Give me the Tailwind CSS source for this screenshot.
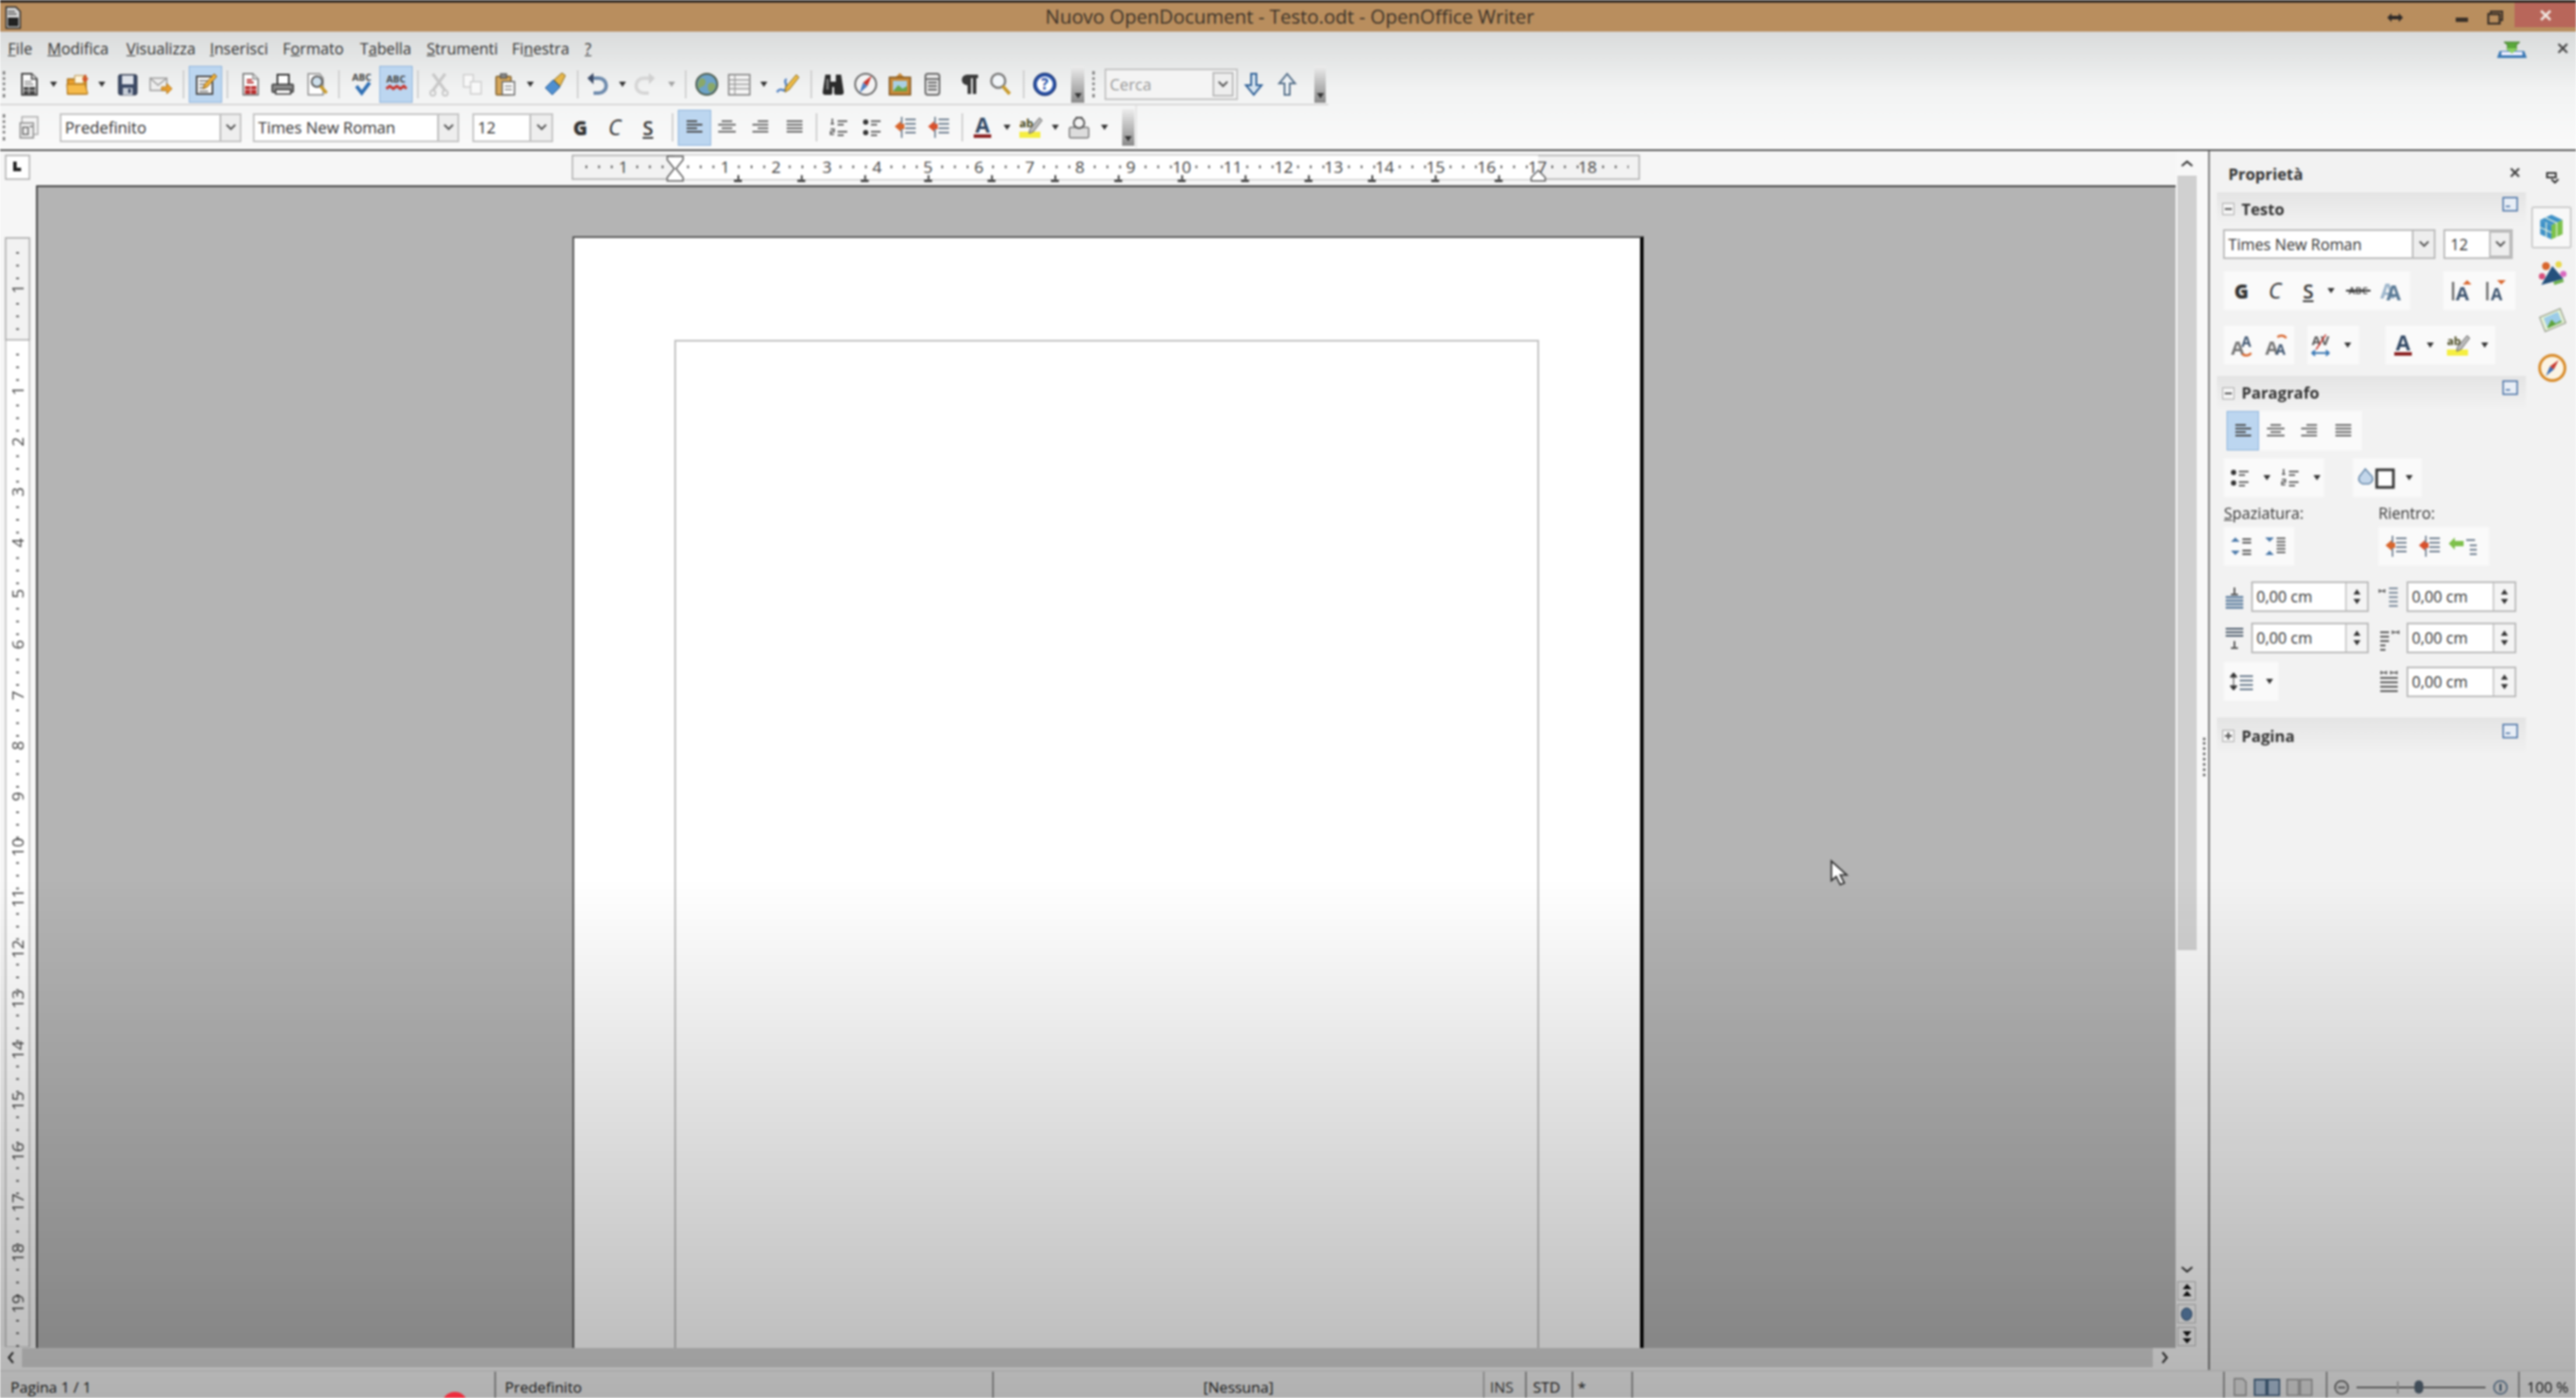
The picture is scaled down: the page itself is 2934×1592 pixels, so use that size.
<!DOCTYPE html>
<html lang="it">
<head>
<meta charset="UTF-8">
<title>Nuovo OpenDocument - Testo.odt - OpenOffice Writer</title>
<script src="https://cdn.jsdelivr.net/npm/@tailwindcss/browser@4"></script>
</head>
<body class="bg-white">
<!-- icon sprite -->
<svg class="hidden">
  <symbol id="dd" viewBox="0 0 8 6"><path d="M0 0h8L4 6z" fill="#333"/></symbol>
  <symbol id="chev" viewBox="0 0 12 8"><path d="M1 1l5 5 5-5" fill="none" stroke="#555" stroke-width="2"/></symbol>
  <symbol id="x" viewBox="0 0 14 14"><path d="M2 2l10 10M12 2L2 12" stroke="#444" stroke-width="2.4"/></symbol>
  <symbol id="i-new" viewBox="0 0 30 30"><path d="M7 3h11l6 6v18H7z" fill="#fafafa" stroke="#444" stroke-width="2"/><path d="M18 3v6h6" fill="#ddd" stroke="#444" stroke-width="1.5"/><path d="M10 12h8M10 15h10" stroke="#888" stroke-width="1.5"/><rect x="9" y="18" width="13" height="8" fill="#444"/><path d="M15 18v8M9 22h13" stroke="#ddd"/></symbol>
  <symbol id="i-open" viewBox="0 0 30 30"><path d="M4 9h9l2-3h10v20H4z" fill="#eaa02e" stroke="#a86c10" stroke-width="1.5"/><path d="M12 5h10v9H12z" fill="#fff5dc" stroke="#b58b3e"/><path d="M3 15h21l3 11H4z" fill="#f6bb4a" stroke="#a86c10"/><path d="M24 4v6M21 8l3 3 3-3" stroke="#d4502a" stroke-width="2" fill="none"/></symbol>
  <symbol id="i-save" viewBox="0 0 30 30"><rect x="5" y="4" width="21" height="23" rx="2" fill="#3c4a66" stroke="#222c40"/><rect x="9" y="5" width="13" height="10" fill="#dfe3ea"/><rect x="10" y="19" width="11" height="8" fill="#c7ced8"/><rect x="16" y="20" width="3" height="5" fill="#3c4a66"/></symbol>
  <symbol id="i-mail" viewBox="0 0 30 30"><rect x="3" y="8" width="19" height="14" fill="#eee" stroke="#9a9a9a" stroke-width="1.5"/><path d="M3 8l9 8 10-8" fill="none" stroke="#9a9a9a" stroke-width="1.5"/><path d="M16 18h6v-4l6 6-6 6v-4h-6z" fill="#eaa030" stroke="#b87a18"/></symbol>
  <symbol id="i-edit" viewBox="0 0 30 30"><rect x="5" y="6" width="18" height="20" fill="#f7f7f7" stroke="#4a4a4a" stroke-width="2"/><path d="M8 11h10M8 15h8M8 19h7M8 23h10" stroke="#777" stroke-width="1.5"/><path d="M25 3l3 3-11 12-5 2 2-5z" fill="#eeb23c" stroke="#8a5a10"/></symbol>
  <symbol id="i-pdf" viewBox="0 0 30 30"><path d="M7 3h11l6 6v18H7z" fill="#fff" stroke="#666" stroke-width="1.5"/><path d="M18 3v6h6" fill="#ddd" stroke="#666"/><path d="M11 10h6M11 13h8" stroke="#b93030" stroke-width="2"/><rect x="9" y="17" width="13" height="9" fill="#b92d2d"/><path d="M15.500 17v9M9 21h13" stroke="#f5d0d0"/></symbol>
  <symbol id="i-print" viewBox="0 0 30 30"><rect x="9" y="4" width="13" height="12" fill="#fff" stroke="#333" stroke-width="2"/><rect x="3" y="15" width="24" height="9" rx="1" fill="#8b8b8b" stroke="#333" stroke-width="1.5"/><rect x="7" y="21" width="17" height="5" fill="#fff" stroke="#333" stroke-width="1.5"/></symbol>
  <symbol id="i-preview" viewBox="0 0 30 30"><path d="M6 3h13l4 5v19H6z" fill="#fff" stroke="#888" stroke-width="1.5"/><circle cx="16" cy="12" r="6" fill="#cfe0ec" stroke="#555" stroke-width="2"/><path d="M20 17l7 8" stroke="#c89a2c" stroke-width="3.500"/></symbol>
  <symbol id="i-spell" viewBox="0 0 30 30"><text x="15" y="11" text-anchor="middle" font-size="11" font-weight="700" fill="#444">ABC</text><path d="M9 17l6 8 9-12" fill="none" stroke="#2f6fb4" stroke-width="4"/></symbol>
  <symbol id="i-auto" viewBox="0 0 30 30"><text x="15" y="13" text-anchor="middle" font-size="11" font-weight="700" fill="#444">ABC</text><path d="M4 20l4-3 4 3 4-3 4 3 4-3 3 3" fill="none" stroke="#c8352c" stroke-width="3"/></symbol>
  <symbol id="i-cut" viewBox="0 0 30 30"><path d="M8 3l14 19M22 3L8 22" stroke="#c8c8c8" stroke-width="3.500"/><circle cx="8" cy="25" r="3" fill="none" stroke="#c8c8c8" stroke-width="2"/><circle cx="22" cy="25" r="3" fill="none" stroke="#c8c8c8" stroke-width="2"/></symbol>
  <symbol id="i-copy" viewBox="0 0 30 30"><rect x="5" y="4" width="11" height="14" fill="#f8f8f8" stroke="#ccc" stroke-width="1.5"/><rect x="13" y="12" width="12" height="14" fill="#f8f8f8" stroke="#ccc" stroke-width="1.5"/></symbol>
  <symbol id="i-paste" viewBox="0 0 30 30"><rect x="5" y="6" width="17" height="21" rx="1" fill="#d6a75a" stroke="#7c5b26" stroke-width="1.5"/><rect x="10" y="3" width="7" height="5" fill="#888" stroke="#444"/><rect x="12" y="12" width="14" height="15" fill="#fff" stroke="#666" stroke-width="1.5"/><path d="M15 17h8M15 21h8" stroke="#888" stroke-width="1.5"/></symbol>
  <symbol id="i-brush" viewBox="0 0 30 30"><path d="M4 19l9-9 8 8-9 9z" fill="#4f8fd0" stroke="#2a5d96"/><path d="M14 10l9-8 4 3-6 12z" fill="#e6b64a" stroke="#8a6a1c"/></symbol>
  <symbol id="i-undo" viewBox="0 0 30 30"><path d="M8 8h9a8 8 0 0 1 0 17h-6" fill="none" stroke="#6d8aac" stroke-width="4"/><path d="M11 2L4 8l7 7z" fill="#3b4a66"/></symbol>
  <symbol id="i-redo" viewBox="0 0 30 30"><path d="M22 8h-9a8 8 0 0 0 0 17h6" fill="none" stroke="#d6d6d6" stroke-width="4"/><path d="M19 2l7 6-7 7z" fill="#d0d0d0"/></symbol>
  <symbol id="i-globe" viewBox="0 0 30 30"><circle cx="15" cy="15" r="12" fill="#6ea3c8" stroke="#4a5a4a" stroke-width="2"/><path d="M8 8c5 0 7 3 5 7s-6 2-7 6c-2-4-1-9 2-13zM17 14c4-2 8 0 8 3s-4 7-6 7-4-7-2-10z" fill="#8aa868"/></symbol>
  <symbol id="i-table" viewBox="0 0 30 30"><rect x="3" y="4" width="24" height="23" fill="#f5f5f5" stroke="#777" stroke-width="1.5"/><path d="M3 10h24M3 15h24M3 20h24M10 4v23" stroke="#999" stroke-width="1.3"/></symbol>
  <symbol id="i-draw" viewBox="0 0 30 30"><path d="M3 24c5-8 7 2 10-4s-4-8 1-11" fill="none" stroke="#4f7fc0" stroke-width="2.500"/><path d="M25 4l3 3-11 14-5 3 1-6z" fill="#eebb44" stroke="#8a6a1c"/></symbol>
  <symbol id="i-bino" viewBox="0 0 30 30"><path d="M6 4h6v8h6V4h6l3 20a3 3 0 0 1-3 3h-6a2 2 0 0 1-2-2v-7h-2v7a2 2 0 0 1-2 2H6a3 3 0 0 1-3-3z" fill="#2b2b2b"/><rect x="7" y="9" width="3" height="12" fill="#777"/></symbol>
  <symbol id="i-nav" viewBox="0 0 30 30"><circle cx="15" cy="15" r="12" fill="#f4f4f4" stroke="#666" stroke-width="2"/><path d="M22 5l-5 12-5-4z" fill="#c8352c"/><path d="M8 25l4-12 5 4z" fill="#4f7fc0"/></symbol>
  <symbol id="i-gallery" viewBox="0 0 30 30"><path d="M15 2l5 5H10z" fill="#c98a3a"/><rect x="3" y="7" width="24" height="20" fill="#c98a3a" stroke="#7a4f18" stroke-width="1.500"/><rect x="7" y="11" width="16" height="12" fill="#a9d0e4"/><path d="M7 23l6-7 5 4 5-3v6z" fill="#68a64a"/></symbol>
  <symbol id="i-data" viewBox="0 0 30 30"><rect x="7" y="3" width="16" height="24" rx="3" fill="#e8e8e8" stroke="#666" stroke-width="2"/><path d="M7 9h16M10 13h10M10 17h10M10 21h10" stroke="#666" stroke-width="2"/></symbol>
  <symbol id="i-pil" viewBox="0 0 30 30"><path d="M13 4h13v4h-2v18h-4V8h-2v18h-4V16a6 6 0 0 1-1-12z" fill="#3a3a3a"/></symbol>
  <symbol id="i-zoom" viewBox="0 0 30 30"><circle cx="12" cy="11" r="8" fill="#f2f6f9" stroke="#777" stroke-width="2.500"/><path d="M17 17l8 9" stroke="#c89a2c" stroke-width="4"/></symbol>
  <symbol id="i-help" viewBox="0 0 30 30"><circle cx="15" cy="15" r="12.500" fill="#2a52a8" stroke="#1b3676" stroke-width="1.500"/><circle cx="15" cy="15" r="9" fill="#fff"/><text x="15" y="21" text-anchor="middle" font-size="17" font-weight="700" fill="#2a52a8">?</text></symbol>
  <symbol id="i-down" viewBox="0 0 30 30"><path d="M12 3h6v13h6l-9 11-9-11h6z" fill="#d6e4f0" stroke="#2d5f96" stroke-width="2"/></symbol>
  <symbol id="i-up" viewBox="0 0 30 30"><path d="M12 27h6V14h6L15 3 6 14h6z" fill="#eef2f5" stroke="#56708a" stroke-width="2"/></symbol>
  <symbol id="i-styles" viewBox="0 0 30 30"><rect x="7" y="3" width="18" height="20" fill="#f4f4f4" stroke="#aaa" stroke-width="1.500"/><rect x="5" y="10" width="15" height="17" fill="#eee" stroke="#888" stroke-width="1.500"/><path d="M8 15h6v8H8zM16 14h3" stroke="#666" fill="none" stroke-width="1.500"/></symbol>
  <symbol id="a-left" viewBox="0 0 30 30"><path d="M6 8h12M6 12h18M6 16h12M6 20h18" stroke="#4a4a4a" stroke-width="2.200"/></symbol>
  <symbol id="a-center" viewBox="0 0 30 30"><path d="M9 8h12M5 12h20M9 16h12M5 20h20" stroke="#6a6a6a" stroke-width="2.200"/></symbol>
  <symbol id="a-right" viewBox="0 0 30 30"><path d="M12 8h12M6 12h18M12 16h12M6 20h18" stroke="#6a6a6a" stroke-width="2.200"/></symbol>
  <symbol id="a-just" viewBox="0 0 30 30"><path d="M6 8h18M6 12h18M6 16h18M6 20h18" stroke="#666" stroke-width="2.200"/></symbol>
  <symbol id="i-num" viewBox="0 0 30 30"><path d="M8 5v6M6 11h4M6 17h4v3H6v3h4" stroke="#555" stroke-width="1.600" fill="none"/><path d="M14 8h11M14 12h7M14 20h11M14 24h7" stroke="#666" stroke-width="2"/></symbol>
  <symbol id="i-bul" viewBox="0 0 30 30"><circle cx="8" cy="9" r="3" fill="#333"/><circle cx="8" cy="21" r="3" fill="#333"/><path d="M14 8h11M14 12h7M14 20h11M14 24h7" stroke="#666" stroke-width="2"/></symbol>
  <symbol id="i-dec" viewBox="0 0 30 30"><path d="M14 6h12M14 11h12M14 16h12M14 21h12M10 3v24" stroke="#6f7f90" stroke-width="1.800"/><path d="M2 14l7-6v3h4v6H9v3z" fill="#d8652c"/></symbol>
  <symbol id="i-fc" viewBox="0 0 30 30"><text x="15" y="21" text-anchor="middle" font-size="24" font-weight="700" fill="#334a66">A</text><rect x="5" y="23" width="20" height="4" fill="#8a2020"/></symbol>
  <symbol id="i-hl" viewBox="0 0 30 30"><rect x="3" y="20" width="24" height="7" fill="#f5ee40"/><text x="3" y="15" font-size="13" font-weight="700" fill="#4a4a20">ab</text><path d="M26 4l3 3-10 13-5 2 1-5z" fill="#bbb" stroke="#666"/></symbol>
  <symbol id="i-bg" viewBox="0 0 30 30"><rect x="4" y="15" width="22" height="12" rx="2" fill="#ddd" stroke="#777" stroke-width="1.500"/><circle cx="15" cy="10" r="6" fill="#f4f4f4" stroke="#555" stroke-width="2"/><path d="M11 4h8" stroke="#555" stroke-width="2"/></symbol>
  <symbol id="i-strike" viewBox="0 0 30 30"><text x="15" y="19" text-anchor="middle" font-size="11" font-weight="700" fill="#555">ABC</text><path d="M1 15h28" stroke="#333" stroke-width="2"/></symbol>
  <symbol id="i-shadow" viewBox="0 0 30 30"><text x="3" y="24" font-size="24" font-weight="700" fill="#9fb7cc">A</text><text x="10" y="26" font-size="24" font-weight="700" fill="#5a7a96">A</text></symbol>
  <symbol id="i-incr" viewBox="0 0 30 30"><path d="M5 5v21" stroke="#666" stroke-width="2.500"/><text x="8" y="26" font-size="22" font-weight="700" fill="#3e5570">A</text><path d="M16 8l5-5 5 5z" fill="#d8652c"/></symbol>
  <symbol id="i-decr" viewBox="0 0 30 30"><path d="M5 5v21" stroke="#666" stroke-width="2.500"/><text x="9" y="26" font-size="19" font-weight="700" fill="#3e5570">A</text><path d="M16 3h10l-5 5z" fill="#d8652c"/></symbol>
  <symbol id="i-sup" viewBox="0 0 30 30"><text x="1" y="26" font-size="22" font-weight="700" fill="#777">A</text><text x="13" y="17" font-size="16" font-weight="700" fill="#3e5570">A</text><path d="M14 25c3 3 8 2 10-1" stroke="#d8652c" stroke-width="2.500" fill="none"/></symbol>
  <symbol id="i-sub" viewBox="0 0 30 30"><text x="1" y="26" font-size="22" font-weight="700" fill="#777">A</text><text x="13" y="26" font-size="16" font-weight="700" fill="#3e5570">A</text><path d="M15 6c3-3 8-2 10 1" stroke="#d8652c" stroke-width="2.500" fill="none"/></symbol>
  <symbol id="i-av" viewBox="0 0 30 30"><text x="15" y="15" text-anchor="middle" font-size="15" font-weight="700" fill="#555">AV</text><path d="M5 24h20M5 24l4-3M5 24l4 3M25 24l-4-3M25 24l-4 3" stroke="#3a78b4" stroke-width="2" fill="none"/><path d="M21 3L10 20" stroke="#c8352c" stroke-width="1.500"/></symbol>
  <symbol id="i-border" viewBox="0 0 48 30"><path d="M5 14l7-9 8 9a6 6 0 0 1-4 8H9a6 6 0 0 1-4-8z" fill="#c3d6ea" stroke="#6688aa" stroke-width="1.500"/><rect x="25" y="6" width="19" height="20" fill="#fff" stroke="#333" stroke-width="3"/></symbol>
  <symbol id="i-sp1" viewBox="0 0 30 30"><path d="M8 5l5 5H3zM8 25l5-5H3z" fill="#4a78a8"/><path d="M16 7h10M16 11h10M16 20h10M16 24h10" stroke="#555" stroke-width="2"/></symbol>
  <symbol id="i-sp2" viewBox="0 0 30 30"><path d="M8 10l5-5H3zM8 20l5 5H3z" fill="#4a78a8"/><path d="M16 6h10M16 10h10M16 14h10M16 18h10M16 22h10" stroke="#666" stroke-width="2"/></symbol>
  <symbol id="i-inc" viewBox="0 0 30 30"><path d="M14 6h12M14 11h12M14 16h12M14 21h12M10 3v24" stroke="#6f7f90" stroke-width="1.800"/><path d="M2 14l7-6v3h4v6H9v3z" fill="#d8502c"/></symbol>
  <symbol id="i-hang" viewBox="0 0 38 30"><path d="M2 12l7-7v4h10v6H9v4z" fill="#7ec04a"/><path d="M22 8h10M26 14h8M26 19h8M26 24h8" stroke="#6f7f90" stroke-width="2"/></symbol>
  <symbol id="s-above" viewBox="0 0 24 30"><path d="M12 4v8M8 12h8" stroke="#555" stroke-width="2"/><path d="M2 15h20M2 19h20M2 23h20M2 27h20" stroke="#5f7f9f" stroke-width="2.500"/></symbol>
  <symbol id="s-below" viewBox="0 0 24 30"><path d="M2 4h20M2 8h20M2 12h20" stroke="#4a5a6a" stroke-width="2.200"/><path d="M12 26v-8M8 26h8" stroke="#555" stroke-width="2"/></symbol>
  <symbol id="s-left" viewBox="0 0 24 30"><path d="M1 8h6M1 6v4M7 6v4" stroke="#555" stroke-width="1.600"/><path d="M12 5h10M12 10h10M12 15h10M12 20h10M12 25h10" stroke="#7a8a9a" stroke-width="2"/></symbol>
  <symbol id="s-right" viewBox="0 0 24 30"><path d="M2 8h10M2 13h10M2 18h10M2 23h6M2 28h6" stroke="#555" stroke-width="2"/><path d="M16 8h7M16 6v4M23 6v4" stroke="#555" stroke-width="1.600"/></symbol>
  <symbol id="s-first" viewBox="0 0 24 30"><path d="M3 5h6M14 5h7M3 3v4M9 3v4M14 3v4M21 3v4" stroke="#555" stroke-width="1.500"/><path d="M2 11h20M2 16h20M2 21h20M2 26h20" stroke="#555" stroke-width="2"/></symbol>
  <symbol id="i-ls" viewBox="0 0 30 30"><path d="M6 5l4 5H2zM6 25l4-5H2zM6 9v12" fill="#333" stroke="#333"/><path d="M13 9h15M13 14h15M13 19h15M13 24h15" stroke="#66788a" stroke-width="2.200"/></symbol>
  <symbol id="p-icon" viewBox="0 0 18 17"><rect x="1" y="1" width="16" height="15" fill="#e8eef6" stroke="#3f6aa0" stroke-width="1.500"/><path d="M4 11h5" stroke="#3f6aa0" stroke-width="1.500"/></symbol>
  <symbol id="t-cube" viewBox="0 0 40 40"><path d="M20 3l15 7-15 7-15-7z" fill="#3f92c8"/><path d="M5 10l15 7v19L5 29z" fill="#3f92c8"/><path d="M35 10L20 17v19l15-7z" fill="#7cc24a"/><path d="M12 7l15 7M5 20l15 7M13 13v20M27 13v20" stroke="#e8f4e0" stroke-width="1.500"/></symbol>
  <symbol id="t-styles" viewBox="0 0 40 40"><path d="M6 34L20 10l14 16z" fill="#24507c"/><circle cx="12" cy="10" r="5" fill="#d8652c"/><circle cx="28" cy="8" r="4" fill="#e8d84a"/><circle cx="34" cy="20" r="4" fill="#d86ac0"/><circle cx="7" cy="23" r="4" fill="#d8507c"/><path d="M22 32l12-4" stroke="#6cb04a" stroke-width="4"/></symbol>
  <symbol id="t-gallery" viewBox="0 0 40 40"><path d="M4 16L30 5l7 18-26 11z" fill="#e6f3d6" stroke="#9aa090" stroke-width="1.500"/><path d="M9 17l18-8 5 12-18 8z" fill="#9ccce8"/><path d="M14 28l5-9 5 5 7-4 1 2-18 8z" fill="#5da23c"/></symbol>
  <symbol id="t-nav" viewBox="0 0 40 40"><circle cx="20" cy="20" r="16" fill="#fbf4e4" stroke="#d88a28" stroke-width="3.500"/><path d="M28 10l-6 12-5-4z" fill="#c8352c"/><path d="M12 30l5-12 5 4z" fill="#3a6ab0"/></symbol>
  <symbol id="v-one" viewBox="0 0 20 24"><path d="M3 2h10l4 4v16H3z" fill="#e8e8e8" stroke="#999" stroke-width="1.500"/></symbol>
  <symbol id="v-two" viewBox="0 0 34 24"><path d="M2 3h14v19H2zM18 3h14v19H18z" fill="#b4c8de" stroke="#4a6a8a" stroke-width="2"/></symbol>
  <symbol id="v-book" viewBox="0 0 34 24"><path d="M2 3h14v19H2zM18 3h14v19H18z" fill="#e4e4e4" stroke="#999" stroke-width="1.500"/></symbol>
</svg>

<div class="relative w-[2934px] h-[1592px] overflow-hidden flex flex-col font-['Open_Sans',sans-serif] text-[#222] blur-[0.8px]">

  <!-- title bar -->
  <div class="flex items-center h-[36px] shrink-0 border-t-[3px] border-[#2a2420] bg-[#b98e5e] relative">
    <svg class="w-[20px] h-[26px] ml-[5px]" viewBox="0 0 20 26"><path d="M2 1h11l5 5v19H2z" fill="#d8d8d8" stroke="#222" stroke-width="1.500"/><rect x="4" y="13" width="12" height="10" fill="#222"/><path d="M4 6h8M4 9h10" stroke="#555" stroke-width="1.500"/></svg>
    <div class="flex-1 text-center text-[22px] leading-none pl-[194px] pb-[3px] text-[#3c3228]">Nuovo OpenDocument - Testo.odt - OpenOffice Writer</div>
    <svg class="w-[18px] h-[12px]" viewBox="0 0 18 12"><path d="M0 6l5-5v3h8V1l5 5-5 5V8H5v3z" fill="#2e2a28"/></svg>
    <svg class="w-[14px] h-[6px] ml-[60px] mt-[6px]" viewBox="0 0 14 6"><rect width="14" height="5" fill="#3a3028"/></svg>
    <svg class="w-[18px] h-[16px] ml-[22px]" viewBox="0 0 18 16"><path d="M4 4V1h13v10h-3" fill="none" stroke="#3a3028" stroke-width="2"/><rect x="1" y="4" width="13" height="11" fill="none" stroke="#3a3028" stroke-width="2.500"/></svg>
    <div class="w-[70px] h-[28px] ml-[13px] self-start bg-[#b8665a] flex items-center justify-center">
      <svg class="w-[15px] h-[15px]" viewBox="0 0 14 14"><path d="M2 2l10 10M12 2L2 12" stroke="#f0e6e0" stroke-width="2.600"/></svg>
    </div>
  </div>

  <!-- menu + toolbars share the same vertical gradient -->
  <div class="h-[134px] shrink-0 bg-gradient-to-b from-[#d9dbdb] via-[#f2f3f3] via-50% to-[#fafafa]">
    <div class="flex items-center h-[36px] pt-[2px] text-[17.5px] text-[#333] pl-[9px]">
      <span class="w-[45px]"><u>F</u>ile</span>
      <span class="w-[90px]"><u>M</u>odifica</span>
      <span class="w-[95px]"><u>V</u>isualizza</span>
      <span class="w-[83px]"><u>I</u>nserisci</span>
      <span class="w-[88px]">F<u>o</u>rmato</span>
      <span class="w-[76px]">T<u>a</u>bella</span>
      <span class="w-[97px]"><u>S</u>trumenti</span>
      <span class="w-[83px]">Fi<u>n</u>estra</span>
      <span><u>?</u></span>
      <svg class="w-[40px] h-[30px] ml-auto" viewBox="0 0 40 30"><path d="M6 18h28l3 8H3z" fill="#3a78b4"/><path d="M8 19h24v4H8z" fill="#eef"/><path d="M11 8h18l-4 3v6H15v-6z" fill="#5aa83a" stroke="#3a7a22"/><path d="M20 21l-7-6h14z" fill="#8ad060"/></svg>
      <svg class="w-[14px] h-[14px] ml-[31px] mr-[8px]" viewBox="0 0 14 14"><use href="#x"/></svg>
    </div>

    <!-- standard toolbar -->
    <div class="flex items-center h-[48px] pt-[2px] w-[1513px] border-b-2 border-[#d8d8d8]">
      <div class="w-[4px] h-[30px] ml-[3px] border-l-[3px] border-dotted border-[#888] shrink-0"></div>
      <svg class="w-[30px] h-[30px] ml-[11px] shrink-0"><use href="#i-new"/></svg>
      <svg class="w-[8px] h-[6px] ml-[9px] shrink-0"><use href="#dd"/></svg>
      <svg class="w-[30px] h-[30px] ml-[8px] shrink-0"><use href="#i-open"/></svg>
      <svg class="w-[8px] h-[6px] ml-[9px] shrink-0"><use href="#dd"/></svg>
      <svg class="w-[30px] h-[30px] ml-[10px] shrink-0"><use href="#i-save"/></svg>
      <svg class="w-[30px] h-[30px] ml-[8px] shrink-0"><use href="#i-mail"/></svg>
      <div class="w-[2px] h-[32px] ml-[10px] bg-[#d0d0d0] shrink-0"></div>
      <div class="w-[38px] h-[42px] ml-[5px] bg-[#bcd6f0] border border-[#8db4dc] flex items-center justify-center shrink-0"><svg class="w-[30px] h-[30px]"><use href="#i-edit"/></svg></div>
      <div class="w-[2px] h-[32px] ml-[5px] bg-[#d0d0d0] shrink-0"></div>
      <svg class="w-[30px] h-[30px] ml-[10px] shrink-0"><use href="#i-pdf"/></svg>
      <svg class="w-[30px] h-[30px] ml-[7px] shrink-0"><use href="#i-print"/></svg>
      <svg class="w-[30px] h-[30px] ml-[8px] shrink-0"><use href="#i-preview"/></svg>
      <div class="w-[2px] h-[32px] ml-[10px] bg-[#d0d0d0] shrink-0"></div>
      <svg class="w-[30px] h-[30px] ml-[10px] shrink-0"><use href="#i-spell"/></svg>
      <div class="w-[38px] h-[42px] ml-[5px] bg-[#bcd6f0] border border-[#8db4dc] flex items-center justify-center shrink-0"><svg class="w-[30px] h-[30px]"><use href="#i-auto"/></svg></div>
      <div class="w-[2px] h-[32px] ml-[5px] bg-[#d0d0d0] shrink-0"></div>
      <svg class="w-[30px] h-[30px] ml-[8px] shrink-0"><use href="#i-cut"/></svg>
      <svg class="w-[30px] h-[30px] ml-[8px] shrink-0"><use href="#i-copy"/></svg>
      <svg class="w-[30px] h-[30px] ml-[7px] shrink-0"><use href="#i-paste"/></svg>
      <svg class="w-[8px] h-[6px] ml-[10px] shrink-0"><use href="#dd"/></svg>
      <svg class="w-[30px] h-[30px] ml-[9px] shrink-0"><use href="#i-brush"/></svg>
      <div class="w-[2px] h-[32px] ml-[10px] bg-[#d0d0d0] shrink-0"></div>
      <svg class="w-[30px] h-[30px] ml-[6px] shrink-0"><use href="#i-undo"/></svg>
      <svg class="w-[8px] h-[6px] ml-[10px] shrink-0"><use href="#dd"/></svg>
      <svg class="w-[30px] h-[30px] ml-[7px] shrink-0"><use href="#i-redo"/></svg>
      <svg class="w-[8px] h-[6px] ml-[11px] shrink-0 opacity-40"><use href="#dd"/></svg>
      <div class="w-[2px] h-[32px] ml-[11px] bg-[#d0d0d0] shrink-0"></div>
      <svg class="w-[30px] h-[30px] ml-[8px] shrink-0"><use href="#i-globe"/></svg>
      <svg class="w-[30px] h-[30px] ml-[7px] shrink-0"><use href="#i-table"/></svg>
      <svg class="w-[8px] h-[6px] ml-[9px] shrink-0"><use href="#dd"/></svg>
      <svg class="w-[30px] h-[30px] ml-[8px] shrink-0"><use href="#i-draw"/></svg>
      <div class="w-[2px] h-[32px] ml-[11px] bg-[#d0d0d0] shrink-0"></div>
      <svg class="w-[30px] h-[30px] ml-[9px] shrink-0"><use href="#i-bino"/></svg>
      <svg class="w-[30px] h-[30px] ml-[7px] shrink-0"><use href="#i-nav"/></svg>
      <svg class="w-[30px] h-[30px] ml-[9px] shrink-0"><use href="#i-gallery"/></svg>
      <svg class="w-[30px] h-[30px] ml-[7px] shrink-0"><use href="#i-data"/></svg>
      <svg class="w-[30px] h-[30px] ml-[11px] shrink-0"><use href="#i-pil"/></svg>
      <svg class="w-[30px] h-[30px] ml-[7px] shrink-0"><use href="#i-zoom"/></svg>
      <div class="w-[2px] h-[32px] ml-[10px] bg-[#d0d0d0] shrink-0"></div>
      <svg class="w-[30px] h-[30px] ml-[8px] shrink-0"><use href="#i-help"/></svg>
      <div class="w-[15px] h-[42px] ml-[15px] bg-gradient-to-b from-[#eeeeee] to-[#8a8a8a] flex items-end justify-center pb-[5px] shrink-0"><svg class="w-[8px] h-[6px]"><use href="#dd"/></svg></div>
      <div class="w-[4px] h-[30px] ml-[9px] border-l-[3px] border-dotted border-[#888] shrink-0"></div>
      <div class="w-[152px] h-[36px] ml-[10px] flex items-center border-2 border-[#c4c4c4] bg-[#f4f4f4] text-[18px] text-[#999] pl-[4px] shrink-0">
        <span class="flex-1">Cerca</span>
        <div class="w-[24px] h-[28px] mr-[3px] flex items-center justify-center border-2 border-[#bbb] bg-[#eee]"><svg class="w-[12px] h-[8px]"><use href="#chev"/></svg></div>
      </div>
      <svg class="w-[30px] h-[30px] ml-[3px] shrink-0"><use href="#i-down"/></svg>
      <svg class="w-[30px] h-[30px] ml-[8px] shrink-0"><use href="#i-up"/></svg>
      <div class="w-[13px] h-[42px] ml-[16px] bg-gradient-to-b from-[#eeeeee] to-[#8a8a8a] flex items-end justify-center pb-[5px] shrink-0"><svg class="w-[8px] h-[6px]"><use href="#dd"/></svg></div>
    </div>

    <!-- formatting toolbar -->
    <div class="flex items-center h-[48px] pt-[2px] w-[1295px] border-r-2 border-[#e4e4e4] text-[18px] text-[#333]">
      <div class="w-[4px] h-[30px] ml-[3px] border-l-[3px] border-dotted border-[#888] shrink-0"></div>
      <svg class="w-[30px] h-[30px] ml-[11px] shrink-0"><use href="#i-styles"/></svg>
      <div class="w-[207px] h-[33px] ml-[20px] flex items-center bg-white border-2 border-[#c4c4c4] pl-[4px] shrink-0">
        <span class="flex-1">Predefinito</span>
        <div class="w-[23px] h-[29px] flex items-center justify-center border-l-2 border-[#bbb] bg-[#eeeeee]"><svg class="w-[12px] h-[8px]"><use href="#chev"/></svg></div>
      </div>
      <div class="w-[235px] h-[33px] ml-[13px] flex items-center bg-white border-2 border-[#c4c4c4] pl-[4px] shrink-0">
        <span class="flex-1">Times New Roman</span>
        <div class="w-[23px] h-[29px] flex items-center justify-center border-l-2 border-[#bbb] bg-[#eeeeee]"><svg class="w-[12px] h-[8px]"><use href="#chev"/></svg></div>
      </div>
      <div class="w-[92px] h-[33px] ml-[15px] flex items-center bg-white border-2 border-[#c4c4c4] pl-[4px] shrink-0">
        <span class="flex-1">12</span>
        <div class="w-[25px] h-[29px] flex items-center justify-center border-l-2 border-[#bbb] bg-[#eeeeee]"><svg class="w-[12px] h-[8px]"><use href="#chev"/></svg></div>
      </div>
      <span class="w-[24px] ml-[19px] text-center text-[22px] font-extrabold text-[#333] shrink-0">G</span>
      <span class="w-[24px] ml-[15px] text-center text-[25px] italic text-[#333] shrink-0">C</span>
      <span class="w-[24px] ml-[14px] text-center text-[22px] font-semibold underline text-[#333] shrink-0">S</span>
      <div class="w-[2px] h-[32px] ml-[15px] bg-[#d0d0d0] shrink-0"></div>
      <div class="w-[38px] h-[41px] ml-[5px] bg-[#bcd6f0] border border-[#8db4dc] flex items-center justify-center shrink-0"><svg class="w-[30px] h-[30px]"><use href="#a-left"/></svg></div>
      <svg class="w-[30px] h-[30px] ml-[3px] shrink-0"><use href="#a-center"/></svg>
      <svg class="w-[30px] h-[30px] ml-[8px] shrink-0"><use href="#a-right"/></svg>
      <svg class="w-[30px] h-[30px] ml-[9px] shrink-0"><use href="#a-just"/></svg>
      <div class="w-[2px] h-[32px] ml-[9px] bg-[#d0d0d0] shrink-0"></div>
      <svg class="w-[30px] h-[30px] ml-[9px] shrink-0"><use href="#i-num"/></svg>
      <svg class="w-[30px] h-[30px] ml-[8px] shrink-0"><use href="#i-bul"/></svg>
      <svg class="w-[30px] h-[30px] ml-[9px] shrink-0"><use href="#i-dec"/></svg>
      <svg class="w-[30px] h-[30px] ml-[8px] shrink-0"><use href="#i-inc"/></svg>
      <div class="w-[2px] h-[32px] ml-[10px] bg-[#d0d0d0] shrink-0"></div>
      <svg class="w-[30px] h-[30px] ml-[7px] shrink-0"><use href="#i-fc"/></svg>
      <svg class="w-[8px] h-[6px] ml-[9px] shrink-0"><use href="#dd"/></svg>
      <svg class="w-[30px] h-[30px] ml-[7px] shrink-0"><use href="#i-hl"/></svg>
      <svg class="w-[8px] h-[6px] ml-[10px] shrink-0"><use href="#dd"/></svg>
      <svg class="w-[30px] h-[30px] ml-[8px] shrink-0"><use href="#i-bg"/></svg>
      <svg class="w-[8px] h-[6px] ml-[10px] shrink-0"><use href="#dd"/></svg>
      <div class="w-[14px] h-[42px] ml-[16px] bg-gradient-to-b from-[#eeeeee] to-[#8a8a8a] flex items-end justify-center pb-[5px] shrink-0"><svg class="w-[8px] h-[6px]"><use href="#dd"/></svg></div>
    </div>
  </div>

  <!-- main area -->
  <div class="flex h-[1390px] shrink-0 border-t-2 border-[#555] relative">
    <!-- editor column -->
    <div class="flex flex-col w-[2478px] shrink-0">
      <!-- horizontal ruler -->
      <svg class="w-[2478px] h-[39px] shrink-0 bg-[#f6f6f6] fill-[#444] text-[19px]" viewBox="0 0 2478 39">
        <rect x="6.500" y="5" width="27" height="27" fill="#fff" stroke="#aaa" stroke-width="1.500"/>
        <path d="M15 12v11h9v-4h-5v-7z" fill="#222"/>
        <rect x="652" y="5" width="1215" height="27" fill="#f2f2f2" stroke="#aaa" stroke-width="1.500"/>
        <rect x="768" y="5" width="984" height="27" fill="#fff"/>
        <path d="M666.850 18H1855" stroke="#555" stroke-width="3" stroke-dasharray="2 12.450 2 12.450 2 27"/>
        <path d="M836 34H1720" stroke="#333" stroke-width="2.500" stroke-dasharray="9 63.200"/>
        <path d="M840 30H1720" stroke="#333" stroke-width="5" stroke-dasharray="2 70.200"/>
        <g text-anchor="middle">
          <text x="710" y="25">1</text><text x="826" y="25">1</text><text x="884" y="25">2</text><text x="942" y="25">3</text><text x="999" y="25">4</text><text x="1057" y="25">5</text><text x="1115" y="25">6</text><text x="1173" y="25">7</text><text x="1230" y="25">8</text><text x="1288" y="25">9</text><text x="1346" y="25">10</text><text x="1404" y="25">11</text><text x="1462" y="25">12</text><text x="1519" y="25">13</text><text x="1577" y="25">14</text><text x="1635" y="25">15</text><text x="1693" y="25">16</text><text x="1751" y="25">17</text><text x="1808" y="25">18</text>
        </g>
        <path d="M760 6h18v4l-8 10 8 10v4h-18v-4l8-10-8-10z" fill="#fff" stroke="#555" stroke-width="1.500"/>
        <path d="M1752 22l8 8v4h-16v-4z" fill="#fff" stroke="#555" stroke-width="1.500"/>
      </svg>
      <div class="flex flex-1 min-h-0">
        <!-- vertical ruler -->
        <svg class="w-[41px] h-[1323px] shrink-0 bg-[#f6f6f6] fill-[#444] text-[19px]" viewBox="0 0 41 1323">
          <rect x="6.500" y="60" width="27" height="1263" fill="#fff" stroke="#bbb" stroke-width="1.500"/>
          <rect x="6.500" y="60" width="27" height="116" fill="#f2f2f2" stroke="#aaa" stroke-width="1.500"/>
          <path d="M20 76V1323" stroke="#555" stroke-width="3" stroke-dasharray="2 12.450 2 12.450 2 27"/>
          <g text-anchor="middle">
            <text transform="translate(27 118) rotate(-90)">1</text>
            <text transform="translate(27 234) rotate(-90)">1</text><text transform="translate(27 292) rotate(-90)">2</text><text transform="translate(27 349) rotate(-90)">3</text><text transform="translate(27 407) rotate(-90)">4</text><text transform="translate(27 465) rotate(-90)">5</text><text transform="translate(27 523) rotate(-90)">6</text><text transform="translate(27 581) rotate(-90)">7</text><text transform="translate(27 638) rotate(-90)">8</text><text transform="translate(27 696) rotate(-90)">9</text><text transform="translate(27 754) rotate(-90)">10</text><text transform="translate(27 812) rotate(-90)">11</text><text transform="translate(27 870) rotate(-90)">12</text><text transform="translate(27 927) rotate(-90)">13</text><text transform="translate(27 985) rotate(-90)">14</text><text transform="translate(27 1043) rotate(-90)">15</text><text transform="translate(27 1101) rotate(-90)">16</text><text transform="translate(27 1159) rotate(-90)">17</text><text transform="translate(27 1216) rotate(-90)">18</text><text transform="translate(27 1274) rotate(-90)">19</text>
          </g>
        </svg>
        <!-- workspace -->
        <div class="flex-1 min-w-0 bg-[#b4b4b4] border-l-2 border-t-2 border-[#444] overflow-hidden pl-[609px] pt-[56px]">
          <div class="w-[1220px] h-[1400px] bg-white border-l-2 border-t-2 border-[#555] border-r-4 border-r-black pl-[114px] pt-[116px]">
            <div class="w-[985px] h-[1200px] border-2 border-[#c0c0c0]"></div>
          </div>
        </div>
      </div>
      <!-- horizontal scrollbar -->
      <div class="flex items-start h-[25px] shrink-0 bg-[#f8f8f8]">
        <div class="w-[25px] h-[22px] flex items-center justify-center"><svg class="w-[9px] h-[14px]" viewBox="0 0 9 14"><path d="M7 1L2 7l5 6" fill="none" stroke="#333" stroke-width="2.200"/></svg></div>
        <div class="w-[2427px] h-[22px] bg-[#d6d6d6]"></div>
        <div class="flex-1 h-[22px] flex items-center justify-center"><svg class="w-[9px] h-[14px]" viewBox="0 0 9 14"><path d="M2 1l5 6-5 6" fill="none" stroke="#333" stroke-width="2.200"/></svg></div>
      </div>
    </div>
    <!-- vertical scrollbar -->
    <div class="w-[39px] shrink-0 bg-[#f8f8f8] border-r-2 border-[#777] flex flex-col items-start pl-[2px] relative">
      <div class="w-[22px] h-[28px] flex items-center justify-center"><svg class="w-[14px] h-[9px]" viewBox="0 0 14 9"><path d="M1 7l6-5 6 5" fill="none" stroke="#333" stroke-width="2.200"/></svg></div>
      <div class="w-[22px] h-[882px] bg-[#d0d0d0]"></div>
      <div class="w-[22px] h-[357px]"></div>
      <div class="w-[22px] h-[12px] flex items-center justify-center"><svg class="w-[14px] h-[9px]" viewBox="0 0 14 9"><path d="M1 2l6 5 6-5" fill="none" stroke="#333" stroke-width="2.200"/></svg></div>
      <div class="w-[21px] h-[22px] mt-[8px] border border-[#bbb] flex items-center justify-center"><svg class="w-[12px] h-[16px]" viewBox="0 0 12 16"><path d="M6 0l5 6H1zM6 8l5 6H1z" fill="#111"/></svg></div>
      <div class="w-[21px] h-[22px] mt-[4px] border border-[#bbb] flex items-center justify-center"><svg class="w-[13px] h-[15px]" viewBox="0 0 13 15"><ellipse cx="6.500" cy="7.500" rx="6" ry="7" fill="#5c82ac" stroke="#304f70"/></svg></div>
      <div class="w-[21px] h-[22px] mt-[4px] border border-[#bbb] flex items-center justify-center"><svg class="w-[12px] h-[16px]" viewBox="0 0 12 16"><path d="M6 16l5-6H1zM6 8l5-6H1z" fill="#111"/></svg></div>
      <div class="absolute right-[3px] top-[668px] w-[3px] h-[44px] border-l-[3px] border-dotted border-[#777]"></div>
    </div>

    <!-- sidebar -->
    <div class="flex-1 min-w-0 flex bg-[#f2f2f2] text-[17.5px] text-[#333]">
      <div class="w-[363px] shrink-0 pl-[8px]">
        <!-- deck title -->
        <div class="flex items-center h-[47px] pl-[13px] pr-[9px] font-bold text-[18px] pt-[6px]">
          <span class="flex-1">Proprietà</span>
          <svg class="w-[13px] h-[13px] -mt-[4px]"><use href="#x"/></svg>
        </div>
        <!-- Testo -->
        <div class="w-[352px] h-[38px] flex items-center pl-[6px] pr-[9px] bg-gradient-to-b from-[#e4e4e4] to-[#f2f2f2] font-bold text-[18px]">
          <div class="w-[14px] h-[14px] border border-[#aaa] bg-[#f4f4f4] flex items-center justify-center"><div class="w-[8px] h-[2px] bg-[#555]"></div></div>
          <span class="flex-1 ml-[8px]">Testo</span>
          <svg class="w-[18px] h-[17px] -mt-[12px]"><use href="#p-icon"/></svg>
        </div>
        <div class="flex mt-[4px] pl-[7px]">
          <div class="w-[242px] h-[34px] flex items-center bg-white border-2 border-[#bbb] pl-[4px]">
            <span class="flex-1">Times New Roman</span>
            <div class="w-[25px] h-[30px] flex items-center justify-center border-l-2 border-[#bbb] bg-[#eeeeee]"><svg class="w-[12px] h-[8px]"><use href="#chev"/></svg></div>
          </div>
          <div class="w-[79px] h-[34px] ml-[9px] flex items-center bg-white border-2 border-[#bbb] pl-[6px]">
            <span class="flex-1">12</span>
            <div class="w-[25px] h-[30px] flex items-center justify-center border-2 border-[#bbb] bg-[#eeeeee]"><svg class="w-[12px] h-[8px]"><use href="#chev"/></svg></div>
          </div>
        </div>
        <div class="flex mt-[14px] pl-[8px]">
          <div class="w-[212px] h-[44px] bg-[#fafafa] flex items-center">
            <span class="w-[24px] ml-[8px] text-center text-[22px] font-extrabold">G</span>
            <span class="w-[24px] ml-[14px] text-center text-[25px] italic">C</span>
            <span class="w-[24px] ml-[14px] text-center text-[22px] font-semibold underline">S</span>
            <svg class="w-[8px] h-[6px] ml-[10px]"><use href="#dd"/></svg>
            <svg class="w-[30px] h-[30px] ml-[12px]"><use href="#i-strike"/></svg>
            <svg class="w-[30px] h-[30px] ml-[7px]"><use href="#i-shadow"/></svg>
          </div>
          <div class="w-[82px] h-[44px] ml-[38px] bg-[#fafafa] flex items-center">
            <svg class="w-[30px] h-[30px] ml-[6px]"><use href="#i-incr"/></svg>
            <svg class="w-[30px] h-[30px] ml-[9px]"><use href="#i-decr"/></svg>
          </div>
        </div>
        <div class="flex mt-[18px] pl-[8px]">
          <div class="w-[80px] h-[44px] bg-[#fafafa] flex items-center">
            <svg class="w-[30px] h-[30px] ml-[7px]"><use href="#i-sup"/></svg>
            <svg class="w-[30px] h-[30px] ml-[9px]"><use href="#i-sub"/></svg>
          </div>
          <div class="w-[59px] h-[44px] ml-[15px] bg-[#fafafa] flex items-center">
            <svg class="w-[30px] h-[30px]"><use href="#i-av"/></svg>
            <svg class="w-[8px] h-[6px] ml-[12px]"><use href="#dd"/></svg>
          </div>
          <div class="w-[125px] h-[44px] ml-[30px] bg-[#fafafa] flex items-center">
            <svg class="w-[30px] h-[30px] ml-[5px]"><use href="#i-fc"/></svg>
            <svg class="w-[8px] h-[6px] ml-[12px]"><use href="#dd"/></svg>
            <svg class="w-[30px] h-[30px] ml-[12px]"><use href="#i-hl"/></svg>
            <svg class="w-[8px] h-[6px] ml-[12px]"><use href="#dd"/></svg>
          </div>
        </div>
        <!-- Paragrafo -->
        <div class="w-[352px] h-[39px] mt-[13px] flex items-center pl-[6px] pr-[9px] bg-gradient-to-b from-[#e4e4e4] to-[#f2f2f2] font-bold text-[18px]">
          <div class="w-[14px] h-[14px] border border-[#aaa] bg-[#f4f4f4] flex items-center justify-center"><div class="w-[8px] h-[2px] bg-[#555]"></div></div>
          <span class="flex-1 ml-[8px]">Paragrafo</span>
          <svg class="w-[18px] h-[17px] -mt-[12px]"><use href="#p-icon"/></svg>
        </div>
        <div class="w-[154px] h-[45px] ml-[11px] mt-[1px] bg-[#fafafa] flex items-center">
          <div class="w-[37px] h-[45px] bg-[#bcd6f0] border border-[#8db4dc] flex items-center justify-center"><svg class="w-[30px] h-[30px]"><use href="#a-left"/></svg></div>
          <svg class="w-[30px] h-[30px] ml-[4px]"><use href="#a-center"/></svg>
          <svg class="w-[30px] h-[30px] ml-[8px]"><use href="#a-right"/></svg>
          <svg class="w-[30px] h-[30px] ml-[9px]"><use href="#a-just"/></svg>
        </div>
        <div class="flex mt-[9px] pl-[8px]">
          <div class="w-[114px] h-[44px] bg-[#fafafa] flex items-center">
            <svg class="w-[30px] h-[30px] ml-[3px]"><use href="#i-bul"/></svg>
            <svg class="w-[8px] h-[6px] ml-[12px]"><use href="#dd"/></svg>
            <svg class="w-[30px] h-[30px] ml-[7px]"><use href="#i-num"/></svg>
            <svg class="w-[8px] h-[6px] ml-[12px]"><use href="#dd"/></svg>
          </div>
          <div class="w-[78px] h-[44px] ml-[33px] bg-[#fafafa] flex items-center">
            <svg class="w-[48px] h-[30px] ml-[2px]"><use href="#i-border"/></svg>
            <svg class="w-[8px] h-[6px] ml-[10px]"><use href="#dd"/></svg>
          </div>
        </div>
        <div class="flex mt-[6px] pl-[8px] h-[24px] items-center">
          <span class="w-[176px]"><u>S</u>paziatura:</span>
          <span>Rientro:</span>
        </div>
        <div class="flex mt-[4px] pl-[8px]">
          <div class="w-[80px] h-[44px] bg-[#fafafa] flex items-center">
            <svg class="w-[30px] h-[30px] ml-[5px]"><use href="#i-sp1"/></svg>
            <svg class="w-[30px] h-[30px] ml-[9px]"><use href="#i-sp2"/></svg>
          </div>
          <div class="w-[126px] h-[44px] ml-[96px] bg-[#fafafa] flex items-center">
            <svg class="w-[30px] h-[30px] ml-[6px]"><use href="#i-dec"/></svg>
            <svg class="w-[30px] h-[30px] ml-[8px]"><use href="#i-inc"/></svg>
            <svg class="w-[38px] h-[30px] ml-[4px]"><use href="#i-hang"/></svg>
          </div>
        </div>
        <div class="flex items-center mt-[18px] pl-[8px]">
          <svg class="w-[24px] h-[30px]"><use href="#s-above"/></svg>
          <div class="w-[134px] h-[35px] ml-[7px] flex items-center bg-white border-2 border-[#bbb] pl-[4px]">
            <span class="flex-1">0,00 cm</span>
            <div class="w-[25px] h-[31px] flex flex-col items-center justify-center gap-[5px] border-l-2 border-[#ccc] bg-[#f4f4f4]"><svg class="w-[9px] h-[6px] rotate-180"><use href="#dd"/></svg><svg class="w-[9px] h-[6px]"><use href="#dd"/></svg></div>
          </div>
          <svg class="w-[24px] h-[30px] ml-[11px]"><use href="#s-left"/></svg>
          <div class="w-[125px] h-[35px] ml-[8px] flex items-center bg-white border-2 border-[#bbb] pl-[4px]">
            <span class="flex-1">0,00 cm</span>
            <div class="w-[25px] h-[31px] flex flex-col items-center justify-center gap-[5px] border-l-2 border-[#ccc] bg-[#f4f4f4]"><svg class="w-[9px] h-[6px] rotate-180"><use href="#dd"/></svg><svg class="w-[9px] h-[6px]"><use href="#dd"/></svg></div>
          </div>
        </div>
        <div class="flex items-center mt-[12px] pl-[8px]">
          <svg class="w-[24px] h-[30px]"><use href="#s-below"/></svg>
          <div class="w-[134px] h-[35px] ml-[7px] flex items-center bg-white border-2 border-[#bbb] pl-[4px]">
            <span class="flex-1">0,00 cm</span>
            <div class="w-[25px] h-[31px] flex flex-col items-center justify-center gap-[5px] border-l-2 border-[#ccc] bg-[#f4f4f4]"><svg class="w-[9px] h-[6px] rotate-180"><use href="#dd"/></svg><svg class="w-[9px] h-[6px]"><use href="#dd"/></svg></div>
          </div>
          <svg class="w-[24px] h-[30px] ml-[11px]"><use href="#s-right"/></svg>
          <div class="w-[125px] h-[35px] ml-[8px] flex items-center bg-white border-2 border-[#bbb] pl-[4px]">
            <span class="flex-1">0,00 cm</span>
            <div class="w-[25px] h-[31px] flex flex-col items-center justify-center gap-[5px] border-l-2 border-[#ccc] bg-[#f4f4f4]"><svg class="w-[9px] h-[6px] rotate-180"><use href="#dd"/></svg><svg class="w-[9px] h-[6px]"><use href="#dd"/></svg></div>
          </div>
        </div>
        <div class="flex items-center mt-[10px] pl-[8px]">
          <div class="w-[62px] h-[44px] bg-[#fafafa] flex items-center">
            <svg class="w-[30px] h-[30px] ml-[5px]"><use href="#i-ls"/></svg>
            <svg class="w-[8px] h-[6px] ml-[13px]"><use href="#dd"/></svg>
          </div>
          <svg class="w-[24px] h-[30px] ml-[114px]"><use href="#s-first"/></svg>
          <div class="w-[125px] h-[35px] ml-[8px] flex items-center bg-white border-2 border-[#bbb] pl-[4px]">
            <span class="flex-1">0,00 cm</span>
            <div class="w-[25px] h-[31px] flex flex-col items-center justify-center gap-[5px] border-l-2 border-[#ccc] bg-[#f4f4f4]"><svg class="w-[9px] h-[6px] rotate-180"><use href="#dd"/></svg><svg class="w-[9px] h-[6px]"><use href="#dd"/></svg></div>
          </div>
        </div>
        <!-- Pagina -->
        <div class="w-[352px] h-[42px] mt-[19px] flex items-center pl-[6px] pr-[9px] bg-gradient-to-b from-[#e4e4e4] to-[#f2f2f2] font-bold text-[18px]">
          <div class="w-[14px] h-[14px] border border-[#aaa] bg-[#f4f4f4] flex items-center justify-center relative"><div class="w-[8px] h-[2px] bg-[#555]"></div><div class="absolute w-[2px] h-[8px] bg-[#555]"></div></div>
          <span class="flex-1 ml-[8px]">Pagina</span>
          <svg class="w-[18px] h-[17px] -mt-[12px]"><use href="#p-icon"/></svg>
        </div>
      </div>
      <!-- sidebar tab bar -->
      <div class="flex-1 flex flex-col items-center">
        <svg class="w-[15px] h-[15px] mt-[22px]" viewBox="0 0 15 15"><path d="M1 3h10v5H1zM6 10l4 4 4-4" fill="none" stroke="#333" stroke-width="2"/></svg>
        <div class="w-[46px] h-[48px] mt-[26px] -ml-[2px] border-2 border-[#ccc] rounded-[3px] bg-[#f8f8f8] flex items-center justify-center"><svg class="w-[34px] h-[36px]"><use href="#t-cube"/></svg></div>
        <svg class="w-[36px] h-[36px] mt-[11px]"><use href="#t-styles"/></svg>
        <svg class="w-[36px] h-[36px] mt-[17px]"><use href="#t-gallery"/></svg>
        <svg class="w-[36px] h-[36px] mt-[18px]"><use href="#t-nav"/></svg>
      </div>
    </div>
  </div>

  <!-- status bar -->
  <div class="flex items-center h-[32px] shrink-0 bg-[#f6f6f6] text-[17px] text-[#222] border-t-2 border-[#e8e8e8]">
    <span class="w-[563px] h-full flex items-center pl-[12px] pt-[6px] shrink-0">Pagina 1 / 1</span>
    <span class="w-[567px] pl-[10px] pt-[6px] h-full flex items-center border-l-2 border-[#9a9a9a] shrink-0">Predefinito</span>
    <span class="w-[559px] h-full pt-[6px] flex items-center justify-center border-l-2 border-[#9a9a9a] shrink-0">[Nessuna]</span>
    <span class="w-[48px] h-full pt-[6px] flex items-center pl-[6px] border-l-2 border-[#bbb] shrink-0 text-[#444]">INS</span>
    <span class="w-[53px] h-full pt-[6px] flex items-center pl-[7px] border-l-2 border-[#9a9a9a] shrink-0">STD</span>
    <span class="w-[68px] h-full pt-[6px] flex items-center pl-[5px] border-l-2 border-[#9a9a9a] shrink-0">*</span>
    <span class="w-[674px] h-full border-l-2 border-[#9a9a9a] shrink-0"></span>
    <div class="w-[117px] h-full pt-[5px] flex items-center border-l-2 border-[#9a9a9a] shrink-0">
      <svg class="w-[19px] h-[23px] ml-[8px]"><use href="#v-one"/></svg>
      <svg class="w-[32px] h-[23px] ml-[5px]"><use href="#v-two"/></svg>
      <svg class="w-[32px] h-[23px] ml-[5px]"><use href="#v-book"/></svg>
    </div>
    <div class="w-[219px] h-full pt-[5px] flex items-center border-l-2 border-[#9a9a9a] shrink-0">
      <svg class="w-[18px] h-[18px] ml-[7px]" viewBox="0 0 18 18"><circle cx="9" cy="9" r="7.500" fill="#eee" stroke="#555" stroke-width="1.600"/><path d="M5 9h8" stroke="#777" stroke-width="2"/></svg>
      <div class="w-[147px] h-[2px] ml-[8px] bg-[#777] flex items-center"><div class="w-[2px] h-[14px] ml-[46px] bg-[#bbb]"></div><div class="w-[10px] h-[15px] ml-[18px] rounded-full bg-[#5a6a7a]"></div></div>
      <svg class="w-[18px] h-[18px] ml-[8px]" viewBox="0 0 18 18"><circle cx="9" cy="9" r="7.500" fill="#eee" stroke="#5a7a9a" stroke-width="1.600"/><path d="M9 5v8" stroke="#3a5a7a" stroke-width="2"/></svg>
    </div>
    <span class="flex-1 h-full pt-[6px] flex items-center pl-[8px] border-l-2 border-[#9a9a9a]">100 %</span>
  </div>

  <!-- video overlay: mouse pointer, darkening gradient, progress dot -->
  <svg class="absolute left-[2084px] top-[978px] w-[24px] h-[33px]" viewBox="0 0 26 34"><path d="M2 2v24l6-5 5 10 5-2-5-10h8z" fill="#fff" stroke="#333" stroke-width="2"/></svg>
  <div class="absolute left-0 right-0 top-[1000px] bottom-0 pointer-events-none bg-gradient-to-b from-black/0 to-black/[0.28]"></div>
  <div class="absolute left-[503px] top-[1585px] w-[30px] h-[30px] rounded-full bg-[#ee2d3d]"></div>
</div>
</body>
</html>
